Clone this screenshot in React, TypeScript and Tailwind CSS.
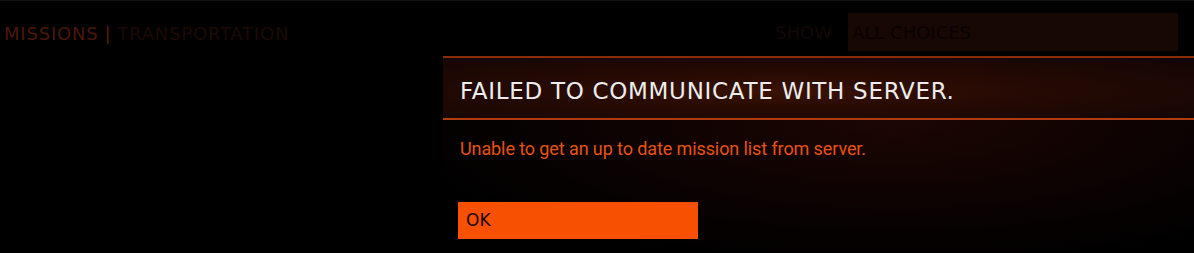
import React from 'react';

const App = () => {
  return (
    <div className="w-[1194px] h-[253px] bg-black overflow-hidden border-t border-[#141210]">
      {/* Top bar */}
      <div className="flex items-start h-[55px]">
        <div
          className="pl-[4px] pt-[21px] text-[18px] leading-[24px] tracking-[0.8px] flex-1"
          style={{ fontFamily: '"DejaVu Sans", sans-serif' }}
        >
          <span className="text-[#4a1806]">MISSIONS</span>
          <span className="text-[#5c1f07] mx-[6px]">|</span>
          <span className="text-[#1c0a04]">TRANSPORTATION</span>
        </div>
        <div className="flex items-start pt-[12px] pr-[16px]">
          <span
            className="text-[#140806] text-[18px] leading-[24px] pt-[8px] mr-[16px]"
            style={{ fontFamily: '"DejaVu Sans", sans-serif' }}
          >
            SHOW
          </span>
          <div
            className="w-[330px] h-[38px] bg-[#170803] flex items-center pl-[4px] text-[18px] text-[#080302]"
            style={{ fontFamily: '"DejaVu Sans", sans-serif' }}
          >
            ALL CHOICES
          </div>
        </div>
      </div>

      {/* Dialog */}
      <div className="ml-[443px] border-t-2 border-[#8a2c06]">
        <div className="h-[62px] flex items-center pl-[17px] pt-[5px] border-b-2 border-[#b03c0a] bg-[radial-gradient(ellipse_at_45%_55%,#3a1204_0%,#260a03_40%,#120505_100%)]">
          <span
            className="text-[#ececec] text-[23px] leading-[24px] tracking-[0.7px]"
            style={{ fontFamily: '"DejaVu Sans", sans-serif' }}
          >
            FAILED TO COMMUNICATE WITH SERVER.
          </span>
        </div>
        <div className="h-[131px] pt-[17px] pl-[17px] bg-[radial-gradient(ellipse_at_60%_0%,#1c0603_0%,#0a0202_50%,#000000_80%)]">
          <div
            className="text-[#e8520e] text-[18px] leading-[24px] tracking-[-0.1px]"
            style={{ fontFamily: 'Roboto, sans-serif' }}
          >
            Unable to get an up to date mission list from server.
          </div>
          <button
            className="mt-[41px] -ml-[2px] w-[240px] h-[37px] bg-[#f75000] flex items-center pl-[8px] text-[#1a0600] text-[17px]"
            style={{ fontFamily: '"DejaVu Sans", sans-serif' }}
          >
            OK
          </button>
        </div>
      </div>
    </div>
  );
};

export default App;
